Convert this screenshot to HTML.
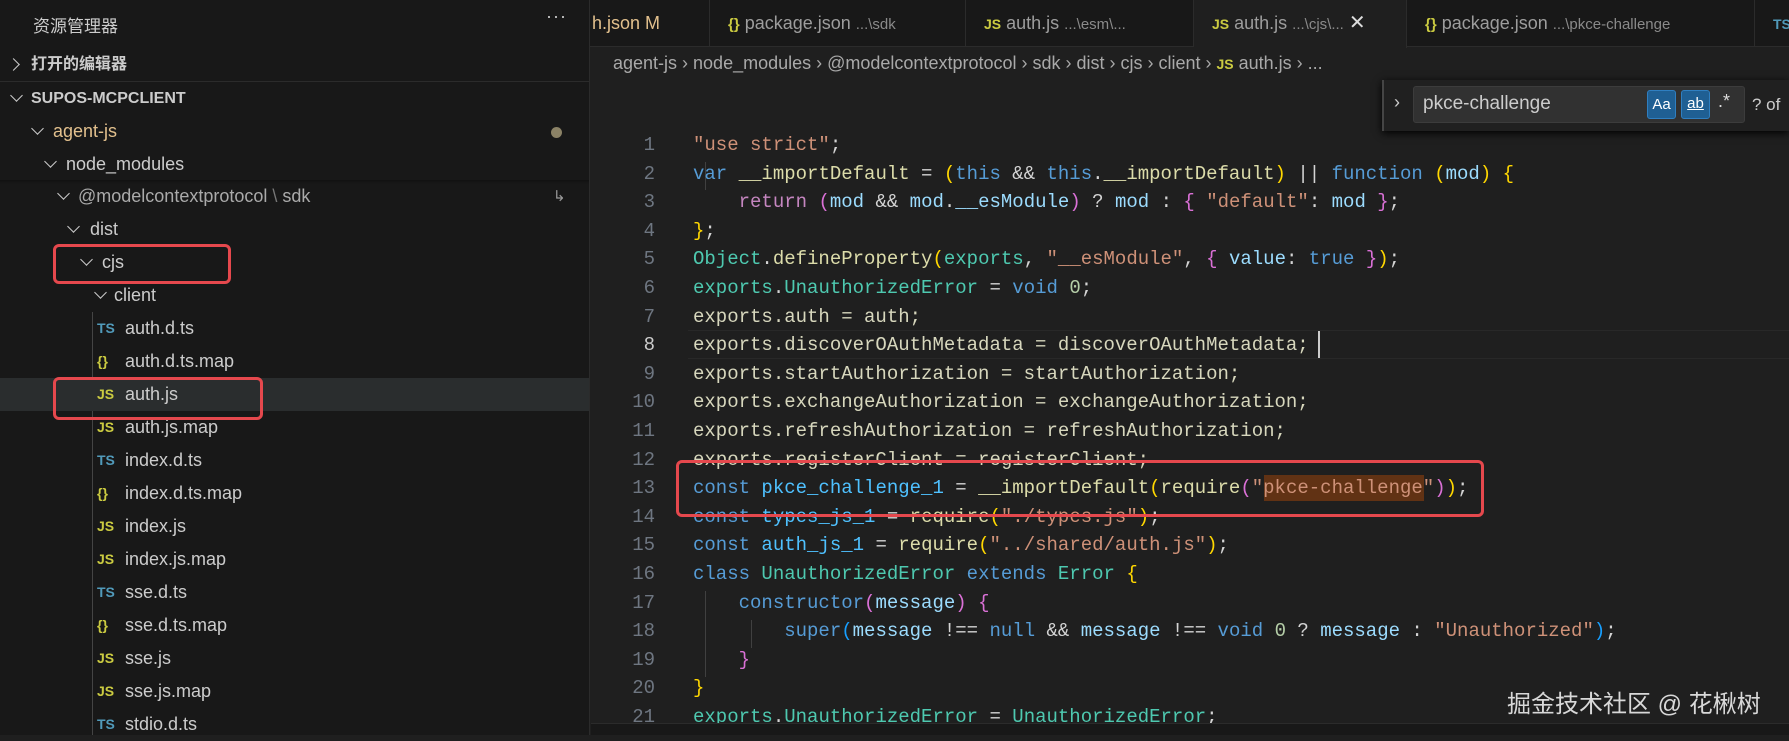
<!DOCTYPE html>
<html><head><meta charset="utf-8"><style>
*{margin:0;padding:0;box-sizing:border-box}
body{width:1789px;height:735px;background:#1f1f1f;overflow:hidden;position:relative;font-family:"Liberation Sans","Noto Sans CJK SC",sans-serif;color:#ccc}
.a{position:absolute;white-space:pre}
#side{position:absolute;left:0;top:0;width:590px;height:735px;background:#181818;border-right:1px solid #2b2b2b}
.row{position:absolute;left:0;width:589px;height:33px;line-height:33px;font-size:18px;color:#ccc;white-space:pre}
.chev{display:inline-block;width:9px;height:9px;border-right:1.6px solid #ccc;border-bottom:1.6px solid #ccc;transform:rotate(45deg);position:absolute;top:9px}
.chr{transform:rotate(-45deg)}
.ic{position:absolute;font-size:14px;font-weight:bold}
.js{color:#cbcb41}.ts{color:#519aba}.br{color:#cbcb41}
#tabs{position:absolute;left:590px;top:0;width:1199px;height:47px;background:#181818;border-bottom:1px solid #2b2b2b}
.tab{position:absolute;top:0;height:47px;line-height:46px;font-size:18px;color:#9d9d9d;border-right:1px solid #2b2b2b;padding-left:18px;white-space:pre}
.tab small{font-size:15px;color:#8a8a8a}
#code{position:absolute;left:0;top:131px;font-family:"Liberation Mono",monospace;font-size:19px}
.ln{position:absolute;left:600px;width:55px;text-align:right;color:#6e7681;height:28.6px;line-height:28.6px}
.cl{position:absolute;left:693px;height:28.6px;line-height:28.6px;color:#d4d4d4;white-space:pre}
.k{color:#569cd6}.s{color:#ce9178}.v{color:#9cdcfe}.f{color:#dcdcaa}.t{color:#4ec9b0}.y{color:#ffd700}.m{color:#da70d6}.b{color:#179fff}.c{color:#4fc1ff}.n{color:#b5cea8}.p{color:#c586c0}.e{color:#d7d7bd}
.red{position:absolute;border:3px solid #e5484d;border-radius:6px}
</style></head><body>
<div id="side">
<div class="a" style="left:33px;top:12px;font-size:17px;color:#ccc">资源管理器</div>
<div class="a" style="left:546px;top:6px;font-size:18px;color:#ccc;letter-spacing:1px">···</div>
<div class="row" style="top:48px;font-weight:bold;font-size:16px"><span class="chev chr" style="left:9px;top:12px"></span><span style="position:absolute;left:31px">打开的编辑器</span></div>
<div style="position:absolute;left:0;top:81px;width:589px;height:1px;background:#2b2b2b"></div>
<div class="row" style="top:82px;font-weight:bold;font-size:16px"><span class="chev" style="left:12px;top:9px"></span><span style="position:absolute;left:31px">SUPOS-MCPCLIENT</span></div>
<div class="row" style="top:115px;color:#e2c08d"><span class="chev" style="left:33px"></span><span style="position:absolute;left:53px">agent-js</span><span style="position:absolute;left:551px;top:12px;width:11px;height:11px;border-radius:50%;background:#8b8266"></span></div>
<div class="row" style="top:148px"><span class="chev" style="left:46px"></span><span style="position:absolute;left:66px">node_modules</span></div>
<div style="position:absolute;left:0;top:180px;width:589px;height:4px;background:linear-gradient(#111,#181818)"></div>
<div class="row" style="top:180px;color:#aaa"><span class="chev" style="left:59px"></span><span style="position:absolute;left:78px">@modelcontextprotocol<span style="color:#777"> \ </span>sdk</span><span style="position:absolute;left:553px;font-size:15px;color:#999">↳</span></div>
<div class="row" style="top:213px"><span class="chev" style="left:69px"></span><span style="position:absolute;left:90px">dist</span></div>
<div class="row" style="top:246px"><span class="chev" style="left:82px"></span><span style="position:absolute;left:102px">cjs</span></div>
<div class="row" style="top:279px"><span class="chev" style="left:96px"></span><span style="position:absolute;left:114px">client</span></div>
<div style="position:absolute;left:92px;top:312px;width:1px;height:423px;background:#444"></div>
<div class="row" style="top:312px"><span class="ic ts" style="left:97px">TS</span><span style="position:absolute;left:125px">auth.d.ts</span></div>
<div class="row" style="top:345px"><span class="ic br" style="left:97px">{}</span><span style="position:absolute;left:125px">auth.d.ts.map</span></div>
<div class="row" style="top:378px;background:#2a2d2e"><span class="ic js" style="left:97px">JS</span><span style="position:absolute;left:125px">auth.js</span></div>
<div class="row" style="top:411px"><span class="ic js" style="left:97px">JS</span><span style="position:absolute;left:125px">auth.js.map</span></div>
<div class="row" style="top:444px"><span class="ic ts" style="left:97px">TS</span><span style="position:absolute;left:125px">index.d.ts</span></div>
<div class="row" style="top:477px"><span class="ic br" style="left:97px">{}</span><span style="position:absolute;left:125px">index.d.ts.map</span></div>
<div class="row" style="top:510px"><span class="ic js" style="left:97px">JS</span><span style="position:absolute;left:125px">index.js</span></div>
<div class="row" style="top:543px"><span class="ic js" style="left:97px">JS</span><span style="position:absolute;left:125px">index.js.map</span></div>
<div class="row" style="top:576px"><span class="ic ts" style="left:97px">TS</span><span style="position:absolute;left:125px">sse.d.ts</span></div>
<div class="row" style="top:609px"><span class="ic br" style="left:97px">{}</span><span style="position:absolute;left:125px">sse.d.ts.map</span></div>
<div class="row" style="top:642px"><span class="ic js" style="left:97px">JS</span><span style="position:absolute;left:125px">sse.js</span></div>
<div class="row" style="top:675px"><span class="ic js" style="left:97px">JS</span><span style="position:absolute;left:125px">sse.js.map</span></div>
<div class="row" style="top:708px"><span class="ic ts" style="left:97px">TS</span><span style="position:absolute;left:125px">stdio.d.ts</span></div>
</div>
<div class="red" style="left:53px;top:244px;width:178px;height:40px"></div>
<div class="red" style="left:53px;top:377px;width:210px;height:43px"></div>

<div id="tabs">
<div class="tab" style="left:0;width:120px;padding-left:2px;color:#e2c08d">h.json M</div>
<div class="tab" style="left:120px;width:256px"><span class="br" style="font-weight:bold;font-size:15px">{}</span> package.json <small>...\sdk</small></div>
<div class="tab" style="left:376px;width:228px"><span class="js" style="font-weight:bold;font-size:14px">JS</span> auth.js <small>...\esm\...</small></div>
<div class="tab" style="left:604px;width:213px;background:#1f1f1f;height:48px"><span class="js" style="font-weight:bold;font-size:14px">JS</span> auth.js <small>...\cjs\...</small> <span style="color:#ddd;font-size:20px">✕</span></div>
<div class="tab" style="left:817px;width:348px"><span class="br" style="font-weight:bold;font-size:15px">{}</span> package.json <small>...\pkce-challenge</small></div>
<div class="tab" style="left:1165px;width:60px;border:none"><span class="ts" style="font-weight:bold;font-size:14px">TS</span></div>
</div>
<div class="a" style="left:613px;top:53px;font-size:18px;color:#a9a9a9">agent-js › node_modules › @modelcontextprotocol › sdk › dist › cjs › client › <span class="js" style="font-weight:bold;font-size:14px">JS</span> auth.js › ...</div>

<div style="position:absolute;left:1382px;top:80px;width:407px;height:51px;background:#202020;box-shadow:0 2px 8px #000;border-left:2px solid #454545"></div>
<div class="a" style="left:1394px;top:92px;font-size:18px;color:#ccc">›</div>
<div style="position:absolute;left:1413px;top:86px;width:332px;height:37px;background:#313131;border:1px solid #3c3c3c;border-radius:3px"></div>
<div class="a" style="left:1423px;top:93px;font-size:19px;color:#ccc">pkce-challenge</div>
<div style="position:absolute;left:1647px;top:90px;width:29px;height:29px;background:#1f5f93;border:1px solid #2f7fc1;border-radius:3px;color:#fff;font-size:15px;text-align:center;line-height:27px">Aa</div>
<div style="position:absolute;left:1681px;top:90px;width:29px;height:29px;background:#1f5f93;border:1px solid #2f7fc1;border-radius:3px;color:#fff;font-size:15px;text-align:center;line-height:25px;text-decoration:underline">ab</div>
<div class="a" style="left:1718px;top:91px;font-size:18px;color:#ddd">.*</div>
<div class="a" style="left:1752px;top:95px;font-size:17px;color:#ccc">? of</div>

<div style="position:absolute;left:688px;top:330px;width:1101px;height:29px;border-top:1px solid #282828;border-bottom:1px solid #282828"></div>
<div style="position:absolute;left:705px;top:162px;width:1px;height:28px;background:#404040"></div>
<div style="position:absolute;left:705px;top:591px;width:1px;height:86px;background:#404040"></div>
<div style="position:absolute;left:751px;top:620px;width:1px;height:28px;background:#404040"></div>
<div style="position:absolute;left:1318px;top:331px;width:2px;height:27px;background:#ccc"></div>
<div style="position:absolute;left:1264px;top:475px;width:160px;height:26px;background:#613214"></div>

<div id="code">
<div class="ln" style="top:0">1</div><div class="cl" style="top:0"><span class="s">"use strict"</span>;</div>
<div class="ln" style="top:28.6px">2</div><div class="cl" style="top:28.6px"><span class="k">var</span> <span class="f">__importDefault</span> = <span class="y">(</span><span class="k">this</span> &amp;&amp; <span class="k">this</span>.<span class="f">__importDefault</span><span class="y">)</span> || <span class="k">function</span> <span class="y">(</span><span class="v">mod</span><span class="y">)</span> <span class="y">{</span></div>
<div class="ln" style="top:57.2px">3</div><div class="cl" style="top:57.2px">    <span class="p">return</span> <span class="m">(</span><span class="v">mod</span> &amp;&amp; <span class="v">mod</span>.<span class="v">__esModule</span><span class="m">)</span> ? <span class="v">mod</span> : <span class="m">{</span> <span class="s">"default"</span>: <span class="v">mod</span> <span class="m">}</span>;</div>
<div class="ln" style="top:85.8px">4</div><div class="cl" style="top:85.8px"><span class="y">}</span>;</div>
<div class="ln" style="top:114.4px">5</div><div class="cl" style="top:114.4px"><span class="t">Object</span>.<span class="f">defineProperty</span><span class="y">(</span><span class="t">exports</span>, <span class="s">"__esModule"</span>, <span class="m">{</span> <span class="v">value</span>: <span class="k">true</span> <span class="m">}</span><span class="y">)</span>;</div>
<div class="ln" style="top:143px">6</div><div class="cl" style="top:143px"><span class="t">exports</span>.<span class="t">UnauthorizedError</span> = <span class="k">void</span> <span class="n">0</span>;</div>
<div class="ln" style="top:171.6px">7</div><div class="cl e" style="top:171.6px">exports.auth = auth;</div>
<div class="ln" style="top:200.2px;color:#ccc">8</div><div class="cl e" style="top:200.2px">exports.discoverOAuthMetadata = discoverOAuthMetadata;</div>
<div class="ln" style="top:228.8px">9</div><div class="cl e" style="top:228.8px">exports.startAuthorization = startAuthorization;</div>
<div class="ln" style="top:257.4px">10</div><div class="cl e" style="top:257.4px">exports.exchangeAuthorization = exchangeAuthorization;</div>
<div class="ln" style="top:286px">11</div><div class="cl e" style="top:286px">exports.refreshAuthorization = refreshAuthorization;</div>
<div class="ln" style="top:314.6px">12</div><div class="cl e" style="top:314.6px">exports.registerClient = registerClient;</div>
<div class="ln" style="top:343.2px">13</div><div class="cl" style="top:343.2px"><span class="k">const</span> <span class="c">pkce_challenge_1</span> = <span class="f">__importDefault</span><span class="y">(</span><span class="f">require</span><span class="m">(</span><span class="s">"pkce-challenge"</span><span class="m">)</span><span class="y">)</span>;</div>
<div class="ln" style="top:371.8px">14</div><div class="cl" style="top:371.8px"><span class="k">const</span> <span class="c">types_js_1</span> = <span class="f">require</span><span class="y">(</span><span class="s">"./types.js"</span><span class="y">)</span>;</div>
<div class="ln" style="top:400.4px">15</div><div class="cl" style="top:400.4px"><span class="k">const</span> <span class="c">auth_js_1</span> = <span class="f">require</span><span class="y">(</span><span class="s">"../shared/auth.js"</span><span class="y">)</span>;</div>
<div class="ln" style="top:429px">16</div><div class="cl" style="top:429px"><span class="k">class</span> <span class="t">UnauthorizedError</span> <span class="k">extends</span> <span class="t">Error</span> <span class="y">{</span></div>
<div class="ln" style="top:457.6px">17</div><div class="cl" style="top:457.6px">    <span class="k">constructor</span><span class="m">(</span><span class="v">message</span><span class="m">)</span> <span class="m">{</span></div>
<div class="ln" style="top:486.2px">18</div><div class="cl" style="top:486.2px">        <span class="k">super</span><span class="b">(</span><span class="v">message</span> !== <span class="k">null</span> &amp;&amp; <span class="v">message</span> !== <span class="k">void</span> <span class="n">0</span> ? <span class="v">message</span> : <span class="s">"Unauthorized"</span><span class="b">)</span>;</div>
<div class="ln" style="top:514.8px">19</div><div class="cl" style="top:514.8px">    <span class="m">}</span></div>
<div class="ln" style="top:543.4px">20</div><div class="cl" style="top:543.4px"><span class="y">}</span></div>
<div class="ln" style="top:572px">21</div><div class="cl" style="top:572px"><span class="t">exports</span>.<span class="t">UnauthorizedError</span> = <span class="t">UnauthorizedError</span>;</div>
</div>
<div style="position:absolute;left:591px;top:723px;width:1198px;height:12px;background:#181818;border-top:1px solid #2b2b2b"></div>
<div class="red" style="left:676px;top:460px;width:808px;height:57px"></div>
<div class="a" style="left:1507px;top:684px;font-size:24px;color:#d8d8d8">掘金技术社区 @ 花楸树</div>
</body></html>
